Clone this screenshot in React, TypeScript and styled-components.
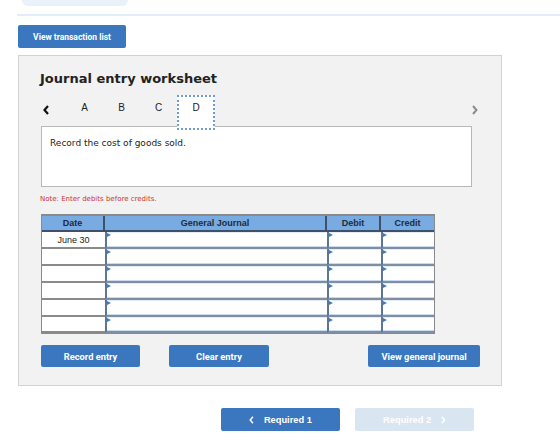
import styled, { createGlobalStyle } from 'styled-components';

const GlobalStyle = createGlobalStyle`
  body {
    margin: 0;
    background: #ffffff;
    font-family: "DejaVu Sans", Verdana, sans-serif;
  }
`;

const Page = styled.div`
  width: 560px;
  height: 447px;
  overflow: hidden;
  padding-left: 18px;
  box-sizing: border-box;
`;

const TopTab = styled.div`
  margin-left: 4px;
  width: 106px;
  height: 6px;
  background: #e9f1fa;
  border-radius: 0 0 6px 6px;
`;

const Divider = styled.div`
  margin: 8px 0 0 -1px;
  height: 2px;
  background: #e3edf7;
`;

const BlueButton = styled.button<{ $w: number; $h?: number; $fs?: number; $faded?: boolean }>`
  width: ${(p) => p.$w}px;
  height: ${(p) => p.$h ?? 23}px;
  border: none;
  border-radius: 2px;
  background: ${(p) => (p.$faded ? '#dae5f2' : '#3a77bf')};
  color: #ffffff;
  font-family: Roboto, "Liberation Sans", sans-serif;
  font-weight: 700;
  font-size: ${(p) => p.$fs ?? 8.5}px;
  padding: 0;
  display: flex;
  align-items: center;
  justify-content: center;
  gap: 10px;
  cursor: pointer;
`;

const TopButtonWrap = styled.div`
  margin-top: 9px;
`;

const Panel = styled.div`
  margin-top: 7px;
  width: 484px;
  height: 331px;
  box-sizing: border-box;
  background: #f2f2f2;
  border: 1px solid #d2d2d2;
  padding: 0 0 0 22px;
`;

const Title = styled.h1`
  margin: 15px 0 0 -1px;
  font-family: "DejaVu Sans", Verdana, sans-serif;
  font-weight: 700;
  font-size: 13px;
  color: #222222;
  line-height: 16px;
`;

const TabRow = styled.div`
  margin-top: 8px;
  height: 31px;
  display: flex;
  align-items: flex-start;
  position: relative;
  z-index: 1;
`;

const Arrow = styled.div<{ $w: number; $pad?: number }>`
  width: ${(p) => p.$w}px;
  height: 30px;
  box-sizing: border-box;
  padding-left: ${(p) => p.$pad ?? 0}px;
  display: flex;
  align-items: center;
`;

const Tab = styled.div<{ $active?: boolean }>`
  width: ${(p) => (p.$active ? 38 : 37)}px;
  height: ${(p) => (p.$active ? 35 : 30)}px;
  box-sizing: border-box;
  display: flex;
  align-items: flex-start;
  justify-content: center;
  padding-top: 7px;
  font-family: "Liberation Sans", Arial, sans-serif;
  font-size: 10px;
  color: #222222;
  background: ${(p) => (p.$active ? '#ffffff' : 'transparent')};
  border: ${(p) => (p.$active ? '2px dotted #6f9ad3' : 'none')};
  ${(p) => (p.$active ? 'padding-top: 5px; margin-bottom: -5px;' : '')}
`;

const Spacer = styled.div`
  flex: 1;
`;

const PromptBox = styled.div`
  width: 431px;
  height: 61px;
  box-sizing: border-box;
  background: #ffffff;
  border: 1px solid #b8b8b8;
  padding: 11px 8px;
  font-family: "DejaVu Sans", Verdana, sans-serif;
  font-size: 9px;
  color: #222222;
`;

const Note = styled.div`
  margin: 7px 0 0 -1px;
  font-family: "DejaVu Sans", Verdana, sans-serif;
  font-size: 7px;
  color: #cc3333;
  line-height: 10px;
`;

const Table = styled.div`
  margin-top: 10px;
  width: 394px;
  box-sizing: border-box;
  border: 1px solid #8a8a8a;
  border-top: 2px solid #8a8a8a;
  display: grid;
  grid-template-columns: 63px 222px 54px 53px;
  grid-template-rows: 16px repeat(5, 17px) 16px;
  background: #ffffff;
`;

const HeadCell = styled.div<{ $last?: boolean }>`
  background: #78abe2;
  border-right: ${(p) => (p.$last ? 'none' : '2px solid #3f5068')};
  border-bottom: 2px solid #3f5068;
  display: flex;
  align-items: center;
  justify-content: center;
  font-family: "Liberation Sans", Arial, sans-serif;
  font-weight: 700;
  font-size: 9px;
  color: #1e2a38;
`;

const DateCell = styled.div`
  border-bottom: 2px solid #8a8a8a;
  display: flex;
  align-items: center;
  justify-content: center;
  font-family: "Liberation Sans", Arial, sans-serif;
  font-size: 9px;
  color: #222222;
  background: #ffffff;
`;

const InputCell = styled.div`
  position: relative;
  border-left: 2px solid #5b7697;
  border-bottom: 2px solid #7f8ea2;
  background: #ffffff;
  box-shadow: inset 0 -1px 0 #c9dbef, inset 0 1px 0 #e3edf8;
  &::before {
    content: '';
    position: absolute;
    left: 0;
    top: 1px;
    border-left: 4px solid #3a78c9;
    border-top: 2.5px solid transparent;
    border-bottom: 2.5px solid transparent;
  }
`;

const ActionRow = styled.div`
  margin-top: 11px;
  width: 439px;
  display: flex;
`;

const Gap = styled.div<{ $w: number }>`
  width: ${(p) => p.$w}px;
`;

const BottomNav = styled.div`
  margin: 22px 0 0 203px;
  display: flex;
  gap: 15px;
`;

const NavButton = styled(BlueButton)`
  font-family: "Liberation Sans", Arial, sans-serif;
  font-size: 9.3px;
`;

const Chevron = ({ dir, color, size, weight = 1.8 }: { dir: 'left' | 'right'; color: string; size: number; weight?: number }) => (
  <svg width={size * 0.6} height={size} viewBox="0 0 6 10">
    <polyline
      points={dir === 'left' ? '5,1 1.5,5 5,9' : '1,1 4.5,5 1,9'}
      fill="none"
      stroke={color}
      strokeWidth={weight}
    />
  </svg>
);

const rows = ['June 30', '', '', '', '', ''];

export default function App() {
  return (
    <Page>
      <GlobalStyle />
      <TopTab />
      <Divider />
      <TopButtonWrap>
        <BlueButton $w={108}>View transaction list</BlueButton>
      </TopButtonWrap>
      <Panel>
        <Title>Journal entry worksheet</Title>
        <TabRow>
          <Arrow $w={25} $pad={2}>
            <Chevron dir="left" color="#111" size={10} weight={2.2} />
          </Arrow>
          <Tab>A</Tab>
          <Tab>B</Tab>
          <Tab>C</Tab>
          <Tab $active>D</Tab>
          <Spacer />
          <Arrow $w={29}>
            <Chevron dir="right" color="#8c8c8c" size={10} weight={2} />
          </Arrow>
        </TabRow>
        <PromptBox>Record the cost of goods sold.</PromptBox>
        <Note>Note: Enter debits before credits.</Note>
        <Table>
          <HeadCell>Date</HeadCell>
          <HeadCell>General Journal</HeadCell>
          <HeadCell>Debit</HeadCell>
          <HeadCell $last>Credit</HeadCell>
          {rows.map((d, i) => [
            <DateCell key={`d${i}`}>{d}</DateCell>,
            <InputCell key={`g${i}`} />,
            <InputCell key={`b${i}`} />,
            <InputCell key={`c${i}`} />,
          ])}
        </Table>
        <ActionRow>
          <BlueButton $w={99} $h={22} $fs={9.3}>Record entry</BlueButton>
          <Gap $w={29} />
          <BlueButton $w={100} $h={22} $fs={9.3}>Clear entry</BlueButton>
          <Spacer />
          <BlueButton $w={112} $h={22} $fs={9.3}>View general journal</BlueButton>
        </ActionRow>
      </Panel>
      <BottomNav>
        <NavButton $w={119}>
          <Chevron dir="left" color="#fff" size={8} />
          Required 1
        </NavButton>
        <NavButton $w={119} $faded>
          Required 2
          <Chevron dir="right" color="#fff" size={8} />
        </NavButton>
      </BottomNav>
    </Page>
  );
}
